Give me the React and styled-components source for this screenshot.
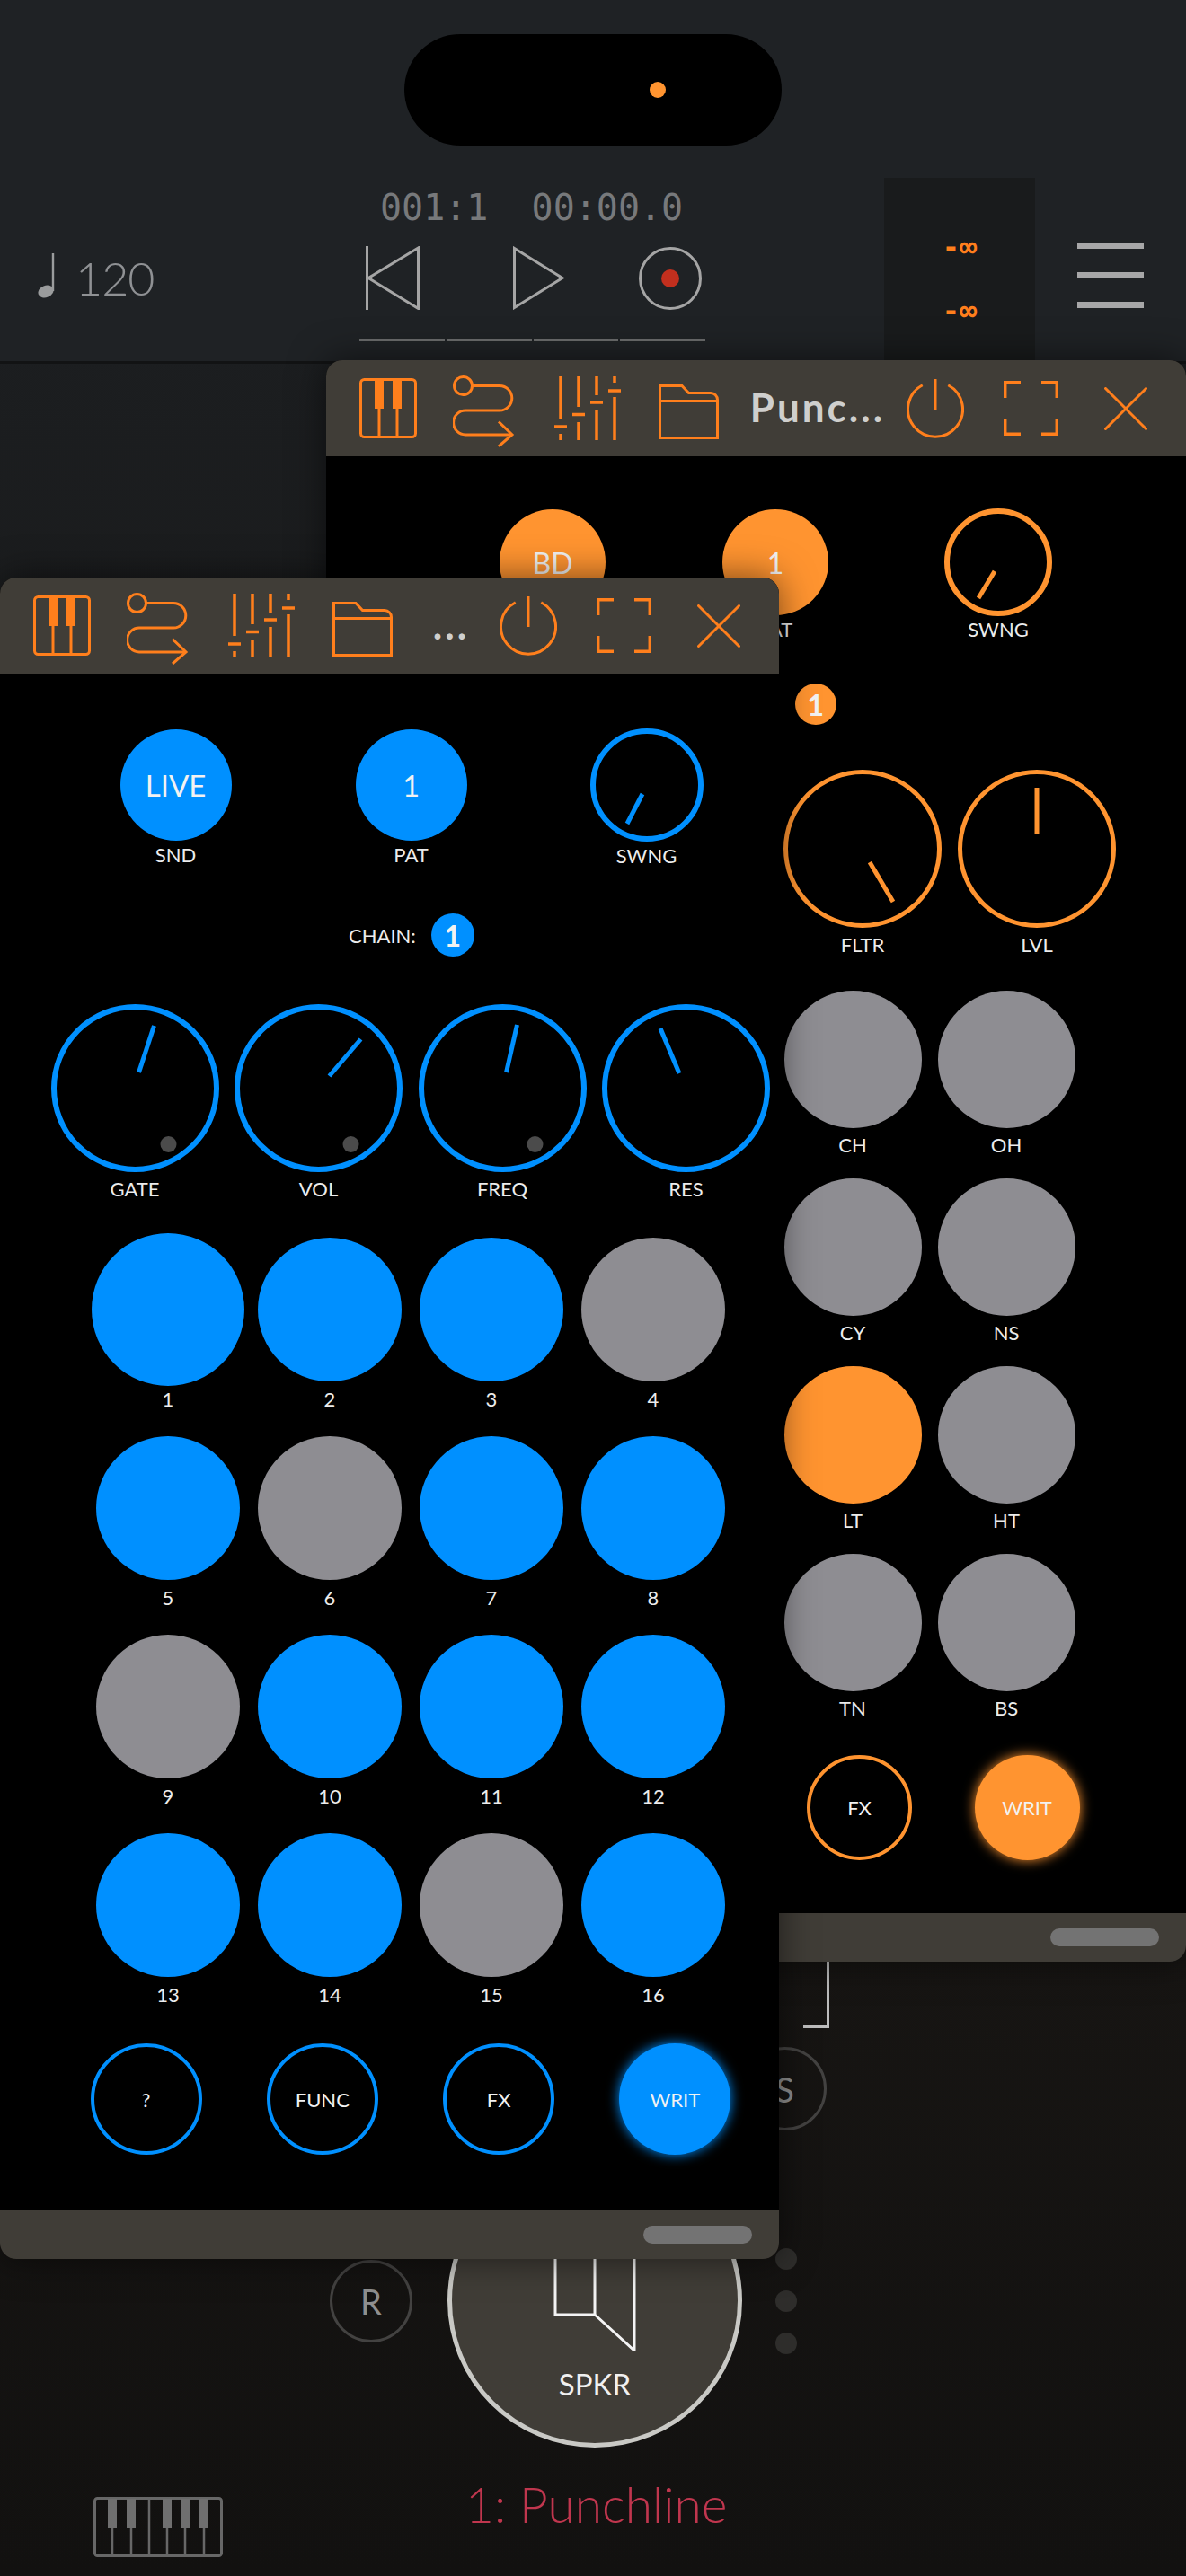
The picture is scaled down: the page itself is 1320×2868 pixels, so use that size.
import React from 'react';
import styled, { createGlobalStyle } from 'styled-components';

const BLUE = '#0090ff';
const ORANGE = '#ff9430';
const ICON = '#ff7f1c';
const GREY = '#8e8d92';

const GlobalStyle = createGlobalStyle`
  html, body { margin: 0; padding: 0; background: #141210; }
  body { font-family: Lato, "Open Sans", sans-serif; }
`;

const Stage = styled.div`
  position: relative;
  width: 1320px;
  height: 2868px;
  overflow: hidden;
  background: linear-gradient(180deg, #1d2023 0%, #1a1b1c 30%, #171513 75%, #121110 100%);
`;

/* top transport bar */
const TopBar = styled.header`
  display: grid;
  grid-template-rows: 198px 1fr;
  height: 402px;
  box-sizing: content-box;
  border-bottom: 3px solid #121314;
  background: #1f2225;
`;

const Island = styled.div`
  justify-self: center;
  position: relative;
  width: 420px;
  height: 124px;
  margin-top: 38px;
  border-radius: 62px;
  background: #000;
`;

const IslandDot = styled.span`
  position: absolute;
  left: 273px;
  top: 53px;
  width: 18px;
  height: 18px;
  border-radius: 50%;
  background: ${ORANGE};
`;

const TransportRow = styled.div`
  display: flex;
  padding-left: 42px;
`;

const Tempo = styled.div`
  display: flex;
  align-items: flex-start;
  gap: 22px;
  width: 358px;
  padding-top: 84px;
  box-sizing: border-box;
`;

const TempoValue = styled.span`
  font-size: 52px;
  font-weight: 300;
  line-height: 54px;
  letter-spacing: -1px;
  color: #8f9194;
`;

const Transport = styled.div`
  display: flex;
  flex-direction: column;
  width: 385px;
`;

const Counter = styled.div`
  margin: 10px 0 0 23px;
  font-family: "DejaVu Sans Mono", monospace;
  font-size: 40px;
  line-height: 46px;
  white-space: pre;
  color: #77797b;
`;

const Controls = styled.div`
  display: flex;
  align-items: center;
  height: 71px;
  margin-top: 20px;
  padding-left: 7px;
  gap: 104px;
`;

const RecordRing = styled.div`
  display: flex;
  align-items: center;
  justify-content: center;
  width: 70px;
  height: 70px;
  margin-left: -21px;
  box-sizing: border-box;
  border: 3px solid #a5a5a5;
  border-radius: 50%;
`;

const RecordDot = styled.span`
  width: 20px;
  height: 20px;
  border-radius: 50%;
  background: #c22f1e;
`;

const Progress = styled.div`
  display: flex;
  gap: 2px;
  margin-top: 32px;
`;

const ProgressStep = styled.span`
  flex: 1;
  height: 3px;
  background: #6a6b6c;
`;

const Meter = styled.div`
  display: flex;
  flex-direction: column;
  align-items: center;
  gap: 37px;
  width: 168px;
  margin-left: 199px;
  padding-top: 60px;
  box-sizing: border-box;
  background: #191b1c;
`;

const MeterValue = styled.span`
  font-family: "DejaVu Sans Mono", monospace;
  font-size: 32px;
  font-weight: 700;
  line-height: 34px;
  color: ${ICON};
`;

const Menu = styled.div`
  display: flex;
  flex-direction: column;
  gap: 26px;
  width: 74px;
  margin-left: 47px;
  padding-top: 72px;
`;

const MenuLine = styled.span`
  height: 7px;
  background: #a7a7a8;
`;

/* what sits on the deck behind the floating windows */
const Deck = styled.main`
  display: flex;
  flex-direction: column;
`;

const Bracket = styled.div`
  width: 26px;
  height: 71px;
  margin: 1779px 0 0 894px;
  border-right: 3px solid #bdbdbd;
  border-bottom: 3px solid #bdbdbd;
`;

const RoundKey = styled.div`
  display: flex;
  align-items: center;
  justify-content: center;
  width: ${p => p.$size}px;
  height: ${p => p.$size}px;
  flex: none;
  box-sizing: border-box;
  margin: ${p => p.$margin || 0};
  border: 3px solid #434241;
  border-radius: 50%;
  font-size: 38px;
  font-weight: 400;
  color: #8f8f8f;
`;

const SpeakerRow = styled.div`
  display: flex;
  align-items: center;
  margin: 26px 0 0 367px;
`;

const Speaker = styled.div`
  display: flex;
  flex-direction: column;
  align-items: center;
  width: 328px;
  height: 327px;
  flex: none;
  margin-left: 39px;
  box-sizing: border-box;
  border: 5px solid #c9c9c5;
  border-radius: 50%;
  background: #403d37;
  font-size: 33px;
  font-weight: 400;
  color: #f0f0f0;
`;

const SpeakerLabel = styled.span`
  margin-top: 20px;
  line-height: 34px;
`;

const DotColumn = styled.div`
  display: flex;
  flex-direction: column;
  gap: 23px;
  margin-left: 37px;
`;

const DeckDot = styled.span`
  width: 24px;
  height: 24px;
  border-radius: 50%;
  background: #2e2d2b;
`;

const BottomRow = styled.div`
  display: flex;
  align-items: flex-start;
  margin-top: 33px;
  padding-left: 104px;
`;

const PresetName = styled.div`
  margin: 0 0 0 270px;
  font-size: 55px;
  font-weight: 300;
  line-height: 60px;
  color: #c0364e;
`;

/* floating plugin windows */
const Window = styled.section`
  position: absolute;
  left: ${p => p.$left}px;
  top: ${p => p.$top}px;
  width: ${p => p.$width}px;
  height: ${p => p.$height}px;
  display: flex;
  flex-direction: column;
  border-radius: 18px;
  background: #000;
  box-shadow: 0 0 40px rgba(0, 0, 0, 0.55);
`;

const TitleBar = styled.div`
  display: flex;
  align-items: center;
  flex: none;
  height: 107px;
  padding: 0 14px 0 16px;
  border-radius: 18px 18px 0 0;
  background: #403d37;
`;

const ToolCell = styled.div`
  display: flex;
  justify-content: center;
  flex: none;
  width: ${p => p.$w || 106}px;
  margin-top: ${p => p.$dy || 0}px;
`;

const WindowName = styled.div`
  flex: 1;
  min-width: 0;
  padding: 0 0 3px 16px;
  text-align: center;
  font-size: 44px;
  font-weight: 700;
  line-height: 50px;
  letter-spacing: 3px;
  white-space: nowrap;
  color: #cfcfcd;
`;

const WindowBody = styled.div`
  flex: 1;
  display: flex;
  flex-direction: column;
  min-height: 0;
`;

const WindowFoot = styled.div`
  display: flex;
  justify-content: flex-end;
  align-items: flex-start;
  flex: none;
  height: 54px;
  padding: 17px 30px 0 0;
  box-sizing: border-box;
  border-radius: 0 0 18px 18px;
  background: #403d37;
`;

const Handle = styled.span`
  width: 121px;
  height: 20px;
  border-radius: 10px;
  background: #737373;
`;

const Row = styled.div`
  display: flex;
  align-items: ${p => p.$align || 'flex-start'};
  gap: ${p => p.$gap || 0}px;
  margin-top: ${p => p.$top}px;
  padding-left: ${p => p.$left}px;
`;

const Cell = styled.div`
  display: flex;
  flex-direction: column;
  align-items: center;
  flex: none;
  width: ${p => p.$w}px;
`;

const Label = styled.span`
  margin-top: ${p => p.$top || 0}px;
  font-size: 22px;
  font-weight: 400;
  line-height: 24px;
  white-space: nowrap;
  color: #ececec;
`;

const Disc = styled.div`
  display: flex;
  align-items: center;
  justify-content: center;
  flex: none;
  width: ${p => p.$size}px;
  height: ${p => p.$size}px;
  margin: ${p => p.$margin || 0}px 0;
  box-sizing: border-box;
  border-radius: 50%;
  background: ${p => (p.$outline ? 'transparent' : p.$color)};
  border: ${p => (p.$outline ? `4px solid ${p.$color}` : 'none')};
  box-shadow: ${p => (p.$glow ? `0 0 14px ${p.$color}` : 'none')};
  font-size: ${p => p.$font || 22}px;
  font-weight: ${p => p.$weight || 400};
  color: #f2f2f2;
`;

const ChainText = styled.span`
  font-size: 22px;
  font-weight: 400;
  color: #ececec;
`;

const stroke = { fill: 'none', stroke: ICON, strokeWidth: 3 };

const PianoIcon = ({ color = ICON }) => (
  <svg width="64" height="67" viewBox="0 0 64 67">
    <rect x="1.5" y="1.5" width="61" height="64" rx="4" fill="none" stroke={color} strokeWidth="3" />
    <path d="M17 2h10v32H17zM37 2h10v32H37z" fill={color} />
    <path d="M22 34v32M42 34v32" fill="none" stroke={color} strokeWidth="3" />
  </svg>
);

const RouteIcon = () => (
  <svg width="69" height="80" viewBox="0 0 69 80">
    <circle cx="11.5" cy="11.5" r="10" {...stroke} />
    <path d="M21.5 11.5H52a13.8 13.8 0 0 1 0 27.6H14a13.4 13.4 0 0 0 0 26.8H66" {...stroke} />
    <path d="M51 51.5L66 65.9 51 79" {...stroke} />
  </svg>
);

const SlidersIcon = () => (
  <svg width="74" height="71" viewBox="0 0 74 71">
    <g fill="none" stroke={ICON} strokeWidth="3.5">
      <path d="M7 0v47M0 56h14M7 64v7" />
      <path d="M27 0v34M20 42.5h14M27 51v20" />
      <path d="M47 0v21M40 29h14M47 37v34" />
      <path d="M67 0v7M60 16h14M67 23v48" />
    </g>
  </svg>
);

const FolderIcon = () => (
  <svg width="67" height="61" viewBox="0 0 67 61">
    <path d="M1.5 1.5H26L33.5 9.5H58a7.5 7.5 0 0 1 7.5 7.5V59.5H1.5zM1.5 18.5H65.5" {...stroke} />
  </svg>
);

const PowerIcon = () => (
  <svg width="64" height="66" viewBox="0 0 64 66">
    <path d="M17.7 6.7A30.5 30.5 0 1 0 46.3 6.7M32 0V34" {...stroke} />
  </svg>
);

const ExpandIcon = () => (
  <svg width="61" height="61" viewBox="0 0 61 61">
    <path d="M1.7 19V1.7H19M42 1.7H59.3V19M1.7 42V59.3H19M42 59.3H59.3V42" fill="none" stroke={ICON} strokeWidth="3.5" />
  </svg>
);

const CloseIcon = () => (
  <svg width="48" height="48" viewBox="0 0 48 48">
    <path d="M1.5 1.5L46.5 46.5M46.5 1.5L1.5 46.5" {...stroke} strokeLinecap="round" />
  </svg>
);

const NoteIcon = () => (
  <svg width="20" height="50" viewBox="0 0 20 50">
    <path d="M17 0V42" fill="none" stroke="#9a9c9d" strokeWidth="2.4" />
    <ellipse cx="9" cy="42.5" rx="8.8" ry="6.6" transform="rotate(-22 9 42.5)" fill="#9a9c9d" />
  </svg>
);

const SkipIcon = () => (
  <svg width="60" height="71" viewBox="0 0 60 71" style={{ flex: 'none' }}>
    <path d="M1.5 0V71M58.5 2V69.5L3 35.5z" fill="none" stroke="#a5a5a5" strokeWidth="3" />
  </svg>
);

const PlayIcon = () => (
  <svg width="57" height="71" viewBox="0 0 57 71" style={{ flex: 'none' }}>
    <path d="M1.5 2.5V68.5L55 35.5z" fill="none" stroke="#a5a5a5" strokeWidth="3" />
  </svg>
);

const SpeakerGlyph = () => (
  <svg width="92" height="214" viewBox="0 0 92 214" style={{ flex: 'none' }}>
    <path d="M2 0V174H46V0M46 174L90 214V0" fill="none" stroke="#f4f4f4" strokeWidth="3" />
  </svg>
);

const KeyboardIcon = () => (
  <svg width="144" height="67" viewBox="0 0 144 67" style={{ flex: 'none', marginTop: 22 }}>
    <rect x="1.5" y="1.5" width="141" height="64" rx="3" fill="none" stroke="#676767" strokeWidth="3" />
    <path d="M16 2h10v33H16zM37 2h10v33H37zM77 2h10v33H77zM97 2h10v33H97zM118 2h10v33h-10z" fill="#6f6f6f" />
    <path d="M21 35v31M42 35v31M62 2v64M82 35v31M102 35v31M123 35v31" fill="none" stroke="#676767" strokeWidth="2.5" />
  </svg>
);

const Knob = ({ size, color, ring = 6, needle, dot }) => {
  const mid = size / 2;
  return (
    <svg width={size} height={size} viewBox={`0 0 ${size} ${size}`} style={{ flex: 'none' }}>
      <circle cx={mid} cy={mid} r={mid - ring / 2} fill="none" stroke={color} strokeWidth={ring} />
      <line x1={needle[0]} y1={needle[1]} x2={needle[2]} y2={needle[3]} stroke={color} strokeWidth="5" />
      {dot && <circle cx={dot[0]} cy={dot[1]} r="9" fill="#4b4b4b" />}
    </svg>
  );
};

const Toolbar = ({ title }) => (
  <TitleBar>
    <ToolCell><PianoIcon /></ToolCell>
    <ToolCell $dy={6}><RouteIcon /></ToolCell>
    <ToolCell $w={126}><SlidersIcon /></ToolCell>
    <ToolCell $w={99} $dy={7}><FolderIcon /></ToolCell>
    <WindowName>{title}</WindowName>
    <ToolCell><PowerIcon /></ToolCell>
    <ToolCell><ExpandIcon /></ToolCell>
    <ToolCell><CloseIcon /></ToolCell>
  </TitleBar>
);

const frontKnobs = [
  { label: 'GATE', needle: [114.5, 24, 97.5, 76], dot: [130.5, 156] },
  { label: 'VOL', needle: [140.5, 39, 105.5, 80], dot: [129.5, 156] },
  { label: 'FREQ', needle: [109.5, 23, 97.5, 76], dot: [129.5, 156] },
  { label: 'RES', needle: [65, 27, 86, 77] },
];

const stepRows = [
  [[1, 1], [2, 1], [3, 1], [4, 0]],
  [[5, 1], [6, 0], [7, 1], [8, 1]],
  [[9, 0], [10, 1], [11, 1], [12, 1]],
  [[13, 1], [14, 1], [15, 0], [16, 1]],
];

const drumRows = [
  [['CH', 0], ['OH', 0]],
  [['CY', 0], ['NS', 0]],
  [['LT', 1], ['HT', 0]],
  [['TN', 0], ['BS', 0]],
];

const LivePanel = () => (
  <Window $left={0} $top={643} $width={867} $height={1872}>
    <Toolbar title="..." />
    <WindowBody>
      <Row $top={61} $left={125.5} $gap={122}>
        <Cell $w={140}>
          <Disc $size={124} $margin={1} $color={BLUE} $font={33}>LIVE</Disc>
          <Label $top={3}>SND</Label>
        </Cell>
        <Cell $w={140}>
          <Disc $size={124} $margin={1} $color={BLUE} $font={33}>1</Disc>
          <Label $top={3}>PAT</Label>
        </Cell>
        <Cell $w={140}>
          <Knob size={126} color={BLUE} needle={[58, 73, 41, 106]} />
          <Label $top={4}>SWNG</Label>
        </Cell>
      </Row>
      <Row $top={52} $left={388} $gap={17} $align="center">
        <ChainText>CHAIN:</ChainText>
        <Disc $size={48} $color={BLUE} $font={32} $weight={700}>1</Disc>
      </Row>
      <Row $top={53} $left={56.5} $gap={17.5}>
        {frontKnobs.map(k => (
          <Cell $w={187} key={k.label}>
            <Knob size={187} color={BLUE} needle={k.needle} dot={k.dot} />
            <Label $top={7}>{k.label}</Label>
          </Cell>
        ))}
      </Row>
      {stepRows.map((steps, r) => (
        <Row $top={r === 0 ? 37 : 24} $left={97} key={r}>
          {steps.map(([n, on]) => (
            <Cell $w={180} key={n}>
              <Disc
                $size={n === 1 ? 170 : 160}
                $margin={n === 1 ? 0 : 5}
                $color={on ? BLUE : GREY}
              />
              <Label $top={3}>{n}</Label>
            </Cell>
          ))}
        </Row>
      ))}
      <Row $top={42} $left={100.5} $gap={72.3}>
        {['?', 'FUNC', 'FX'].map(t => (
          <Disc $size={124} $outline $color={BLUE} key={t}>{t}</Disc>
        ))}
        <Disc $size={124} $glow $color={BLUE}>WRIT</Disc>
      </Row>
    </WindowBody>
    <WindowFoot><Handle /></WindowFoot>
  </Window>
);

const DrumPanel = () => (
  <Window $left={363} $top={401} $width={957} $height={1783}>
    <Toolbar title="Punc..." />
    <WindowBody>
      <Row $top={58} $left={182} $gap={108}>
        <Cell $w={140}>
          <Disc $size={118} $margin={1} $color={ORANGE} $font={32}>BD</Disc>
        </Cell>
        <Cell $w={140}>
          <Disc $size={118} $margin={1} $color={ORANGE} $font={32}>1</Disc>
          <Label $top={3}>PAT</Label>
        </Cell>
        <Cell $w={140}>
          <Knob size={120} color={ORANGE} needle={[56, 70, 38, 100]} />
          <Label $top={3}>SWNG</Label>
        </Cell>
      </Row>
      <Row $top={48} $left={430} $gap={17} $align="center">
        <ChainText>CHAIN:</ChainText>
        <Disc $size={46} $color={ORANGE} $font={32} $weight={700}>1</Disc>
      </Row>
      <Row $top={50} $left={509} $gap={18}>
        <Cell $w={176}>
          <Knob size={176} ring={5} color={ORANGE} needle={[96, 103, 122, 147]} />
          <Label $top={7}>FLTR</Label>
        </Cell>
        <Cell $w={176}>
          <Knob size={176} ring={5} color={ORANGE} needle={[88, 20, 88, 71]} />
          <Label $top={7}>LVL</Label>
        </Cell>
      </Row>
      {drumRows.map((pads, r) => (
        <Row $top={r === 0 ? 39 : 25} $left={500.5} key={r}>
          {pads.map(([name, on]) => (
            <Cell $w={171} key={name}>
              <Disc $size={153} $color={on ? ORANGE : GREY} />
              <Label $top={7}>{name}</Label>
            </Cell>
          ))}
        </Row>
      ))}
      <Row $top={40} $left={535} $gap={69.5}>
        <Disc $size={117} $outline $color={ORANGE}>FX</Disc>
        <Disc $size={117} $glow $color={ORANGE}>WRIT</Disc>
      </Row>
    </WindowBody>
    <WindowFoot><Handle /></WindowFoot>
  </Window>
);

export default function App() {
  return (
    <Stage>
      <GlobalStyle />
      <TopBar>
        <Island><IslandDot /></Island>
        <TransportRow>
          <Tempo>
            <NoteIcon />
            <TempoValue>120</TempoValue>
          </Tempo>
          <Transport>
            <Counter>{'001:1  00:00.0'}</Counter>
            <Controls>
              <SkipIcon />
              <PlayIcon />
              <RecordRing><RecordDot /></RecordRing>
            </Controls>
            <Progress>
              <ProgressStep /><ProgressStep /><ProgressStep /><ProgressStep />
            </Progress>
          </Transport>
          <Meter>
            <MeterValue>-∞</MeterValue>
            <MeterValue>-∞</MeterValue>
          </Meter>
          <Menu>
            <MenuLine /><MenuLine /><MenuLine />
          </Menu>
        </TransportRow>
      </TopBar>
      <Deck>
        <Bracket />
        <RoundKey $size={93} $margin="21px 0 0 827px">S</RoundKey>
        <SpeakerRow>
          <RoundKey $size={92}>R</RoundKey>
          <Speaker>
            <SpeakerGlyph />
            <SpeakerLabel>SPKR</SpeakerLabel>
          </Speaker>
          <DotColumn>
            <DeckDot /><DeckDot /><DeckDot />
          </DotColumn>
        </SpeakerRow>
        <BottomRow>
          <KeyboardIcon />
          <PresetName>1: Punchline</PresetName>
        </BottomRow>
      </Deck>
      <DrumPanel />
      <LivePanel />
    </Stage>
  );
}
